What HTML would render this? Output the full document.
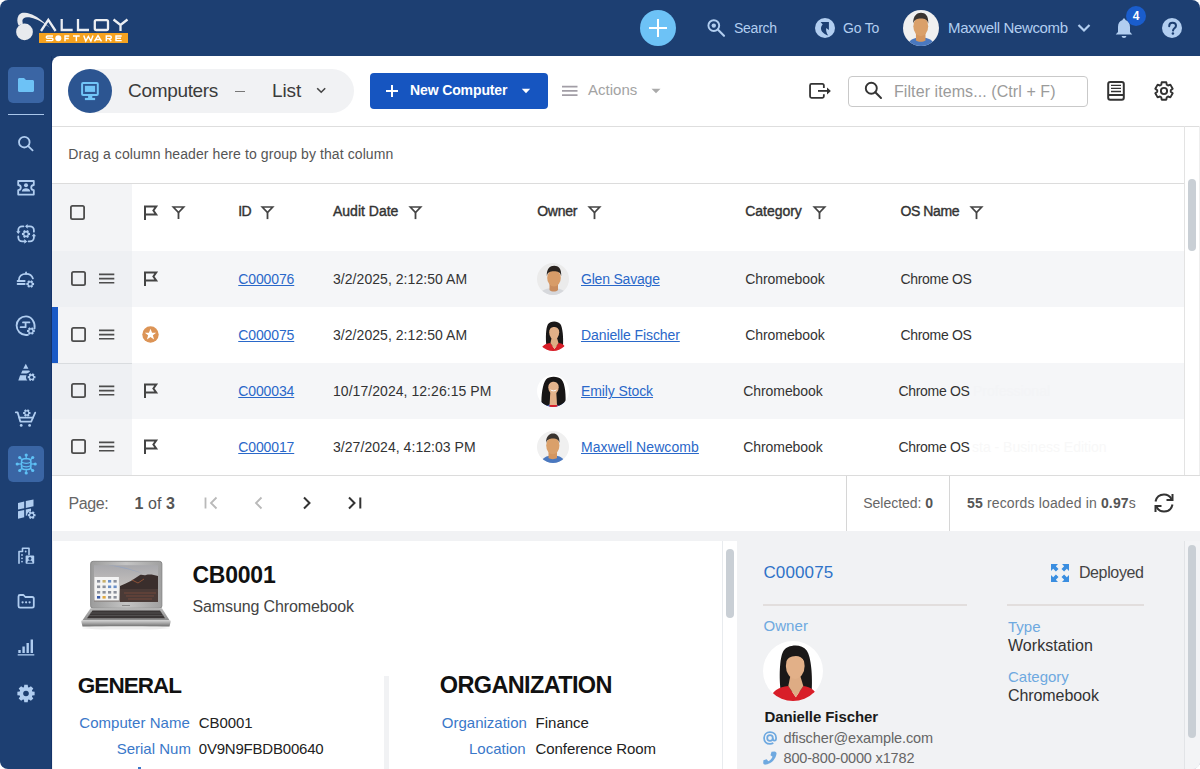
<!DOCTYPE html>
<html><head><meta charset="utf-8">
<style>
*{box-sizing:border-box;margin:0;padding:0}
html,body{width:1200px;height:769px;overflow:hidden;background:#fff;font-family:"Liberation Sans",sans-serif}
.app{position:absolute;left:0;top:0;width:1200px;height:769px;background:#1d3f72;border-radius:8px;overflow:hidden}
.a{position:absolute}
.t{position:absolute;line-height:1;white-space:nowrap}
svg{position:absolute;overflow:visible}
u{text-decoration:underline;text-underline-offset:1px}
</style></head><body>
<div class="app">
<svg style="left:0;top:0" width="140" height="56" viewBox="0 0 140 56">
  <circle cx="24.5" cy="31.9" r="8.4" fill="#e8eaee"/>
  <path d="M18.6 25.5 C17 22.5 16.8 18.5 18.5 15.5 C20 13 22.5 12.6 25 12.7 C31 13 38 17 44 22.5 L50 27.8 L43.5 23.3 C38 19.5 31.5 17 27 17.2 C24.5 17.3 22.6 18.5 22.4 20.5 C22.3 21.8 22.6 22.8 23 23.5 Z" fill="#e8eaee"/>
  <g fill="none" stroke="#eceef2" stroke-width="2.3" stroke-linejoin="miter">
    <path d="M41 31 L48.3 19.8 L55.6 31"/>
    <path d="M61.7 19 V30 H72.7"/>
    <path d="M78 19 V30 H89"/>
    <rect x="94.8" y="20.1" width="13.2" height="9.9" rx="1.5"/>
    <path d="M113.5 19.5 L120.5 25 L127.5 19.5 M120.5 25 V31"/>
  </g>
  <rect x="39" y="33" width="89" height="10" fill="#f5a21f"/>
  <g fill="none" stroke="#ffffff" stroke-width="1.45">
    <path d="M53 36 H47.5 C46.6 36 46.3 36.5 46.3 37.2 C46.3 37.9 46.6 38.3 47.5 38.3 H51.8 C52.7 38.3 53 38.8 53 39.5 C53 40.3 52.7 40.6 51.8 40.6 H46.1"/>
    <path d="M65 41.3 V36 H69.3 M65 38.5 H68.8"/>
    <path d="M73 36 H79.7 M76.35 36 V41.3"/>
    <path d="M83.7 35.5 L85.8 41 L88.35 36.5 L90.9 41 L93 35.5"/>
    <path d="M94.5 41.3 L98 35.7 L101.5 41.3 M95.8 39.5 H100.2"/>
    <path d="M106.3 41.3 V36 H110 C111 36 111.3 36.5 111.3 37.3 C111.3 38.1 111 38.6 110 38.6 H106.3 M109 38.6 L111.3 41.3"/>
    <path d="M121.7 36 H116 V40.6 H121.7 M116 38.3 H121"/>
  </g>
  <circle cx="58.3" cy="38.2" r="3" fill="#fff"/>
</svg>
<div class="a" style="left:640px;top:10px;width:36px;height:36px;background:#6dc2f6;border-radius:50%"></div>
<div class="a" style="left:649px;top:26.8px;width:18px;height:2.4px;background:#fff;"></div>
<div class="a" style="left:656.8px;top:19px;width:2.4px;height:18px;background:#fff;"></div>
<svg style="left:700px;top:14px" width="30" height="30" viewBox="0 0 30 30">
  <circle cx="13.8" cy="11.6" r="5.4" fill="none" stroke="#b2cef0" stroke-width="1.9"/>
  <circle cx="13.8" cy="11.6" r="2.2" fill="#b2cef0"/>
  <path d="M17.8 15.6 L24 21.8" stroke="#b2cef0" stroke-width="2.1" stroke-linecap="round"/>
</svg>
<div class="t" style="left:734px;top:21.45px;font-size:14px;color:#b2cef0;letter-spacing:-0.25px;">Search</div>
<svg style="left:815px;top:18px" width="20" height="20" viewBox="0 0 20 20">
  <circle cx="10" cy="10" r="10" fill="#b2cef0"/>
  <path d="M5.6 4 H13.9 V12 L11.2 10 C10.8 12.5 11.5 15 13.2 17.5 C9 16 6 13.5 6 10.5 C6 8.8 6.7 7.5 7.7 6.6 Z" fill="#1d3f72"/>
</svg>
<div class="t" style="left:843px;top:21.45px;font-size:14px;color:#b2cef0;letter-spacing:-0.2px;">Go To</div>
<svg style="left:903px;top:10px" width="36" height="36" viewBox="0 0 32 32">
  <defs><clipPath id="cav1"><circle cx="16" cy="16" r="16"/></clipPath></defs>
  <g clip-path="url(#cav1)">
    <rect width="32" height="32" fill="#f0f0f0"/>
    <path d="M4 32 C5 27 9 24.5 16 24.5 C23 24.5 27 27 28 32 Z" fill="#4a78bf"/>
    <path d="M11.5 19 H20 V27 C18 28.5 13.5 28.5 11.5 27 Z" fill="#d49660"/>
    <ellipse cx="15.8" cy="14.5" rx="6.6" ry="8.8" fill="#daa06a"/>
    <path d="M9 12 C9 5 12.5 2.5 16 2.5 C19.8 2.5 22.8 5 22.5 12 C21.5 8.5 19.5 7.5 16 7.5 C12.5 7.5 10 8.5 9 12 Z" fill="#3a3430"/>
  </g>
</svg>
<div class="t" style="left:948px;top:19.60px;font-size:15px;color:#b2cef0;letter-spacing:-0.36px;">Maxwell Newcomb</div>
<svg style="left:1076px;top:22px" width="16" height="12" viewBox="0 0 16 12">
  <path d="M2.5 3 L8 8.5 L13.5 3" fill="none" stroke="#b2cef0" stroke-width="2.2"/>
</svg>
<svg style="left:1112px;top:16px" width="24" height="24" viewBox="0 0 24 24">
  <path d="M12 2.5 C12.9 2.5 13.4 3.2 13.4 4 C16.5 4.8 18 7.5 18 11 V16 L20.3 18.5 H3.7 L6 16 V11 C6 7.5 7.5 4.8 10.6 4 C10.6 3.2 11.1 2.5 12 2.5 Z" fill="#b2cef0"/>
  <path d="M9.6 20 H14.4 C14.2 21.3 13.3 22 12 22 C10.7 22 9.8 21.3 9.6 20 Z" fill="#b2cef0"/>
</svg>
<div class="a" style="left:1126px;top:6px;width:20px;height:20px;background:#1a5dcc;border-radius:50%"></div>
<div class="t" style="left:1126px;top:9.5px;width:20px;text-align:center;font-size:12px;font-weight:bold;color:#fff">4</div>
<div class="a" style="left:1162px;top:17.8px;width:20px;height:20px;background:#b2cef0;border-radius:50%"></div>
<svg style="left:1161.5px;top:17.5px" width="21" height="21" viewBox="0 0 21 21">
  <path d="M7.2 8.2 C7.2 6 8.7 4.8 10.6 4.8 C12.6 4.8 14 6 14 7.8 C14 10.2 11.2 10.4 11 12.6" fill="none" stroke="#1d3f72" stroke-width="2" stroke-linecap="round"/>
  <circle cx="10.9" cy="15.6" r="1.25" fill="#1d3f72"/>
</svg>
<div class="a" style="left:51px;top:56px;width:1px;height:713px;background:#14336a;"></div>
<div class="a" style="left:8px;top:67px;width:36px;height:36px;background:#3a65a4;border-radius:5px"></div>
<svg style="left:17px;top:77px" width="18" height="16" viewBox="0 0 18 16">
  <path d="M1 2.5 C1 1.6 1.6 1 2.5 1 H7 L9 3 H15.5 C16.4 3 17 3.6 17 4.5 V13.5 C17 14.4 16.4 15 15.5 15 H2.5 C1.6 15 1 14.4 1 13.5 Z" fill="#6dc2f6"/>
</svg>
<div class="a" style="left:8px;top:114px;width:36px;height:1.2px;background:#a9c6ea;"></div>
<svg style="left:0;top:0" width="52" height="769" viewBox="0 0 52 769">
<g fill="none" stroke="#b0cdf0" stroke-width="1.8" stroke-linecap="round" stroke-linejoin="round">
<circle cx="24.3" cy="142.2" r="5.3"/><path d="M28.2 146.1 L32.6 150.3"/>
<path d="M18.2 181 H33.8 V185 A2.6 2.6 0 0 0 33.8 190.2 V194.6 H18.2 V190.2 A2.6 2.6 0 0 0 18.2 185 Z"/>
</g>
<circle cx="26" cy="185.3" r="2" fill="#b0cdf0"/><path d="M21.8 191.5 C22 189 23.8 188.3 26 188.3 C28.2 188.3 30 189 30.2 191.5 Z" fill="#b0cdf0"/>
<g fill="none" stroke="#b0cdf0" stroke-width="1.8" stroke-linecap="round" stroke-linejoin="round">
<path d="M18.3 232 V230 C18.3 228 20 226.3 22 226.3 H23.5"/>
<path d="M27 226.3 H30 C32.2 226.3 33.9 228 33.9 230.2 V231.7"/>
<path d="M33.9 236 V237.6 C33.9 239.8 32.2 241.4 30 241.4 H28.6"/>
<path d="M18.3 236.5 V237.6 C18.3 239.8 20 241.4 22.2 241.4 H24.5"/>
</g>
<path d="M16.2 231.2 H20.4 L18.3 234 Z M27.6 223.9 V228.7 L25 226.3 Z M31.7 236.2 H36.1 L33.9 233.4 Z M24.3 239 L27.2 241.4 L24.3 243.8 Z" fill="#b0cdf0"/>
<path d="M28.76 232.77 L30.06 232.91 L30.06 235.09 L28.76 235.23 L28.45 235.78 L28.97 236.97 L27.09 238.06 L26.32 237.01 L25.68 237.01 L24.91 238.06 L23.03 236.97 L23.55 235.78 L23.24 235.23 L21.94 235.09 L21.94 232.91 L23.24 232.77 L23.55 232.22 L23.03 231.03 L24.91 229.94 L25.68 230.99 L26.32 230.99 L27.09 229.94 L28.97 231.03 L28.45 232.22 Z" fill="#b0cdf0"/><circle cx="26" cy="234" r="1.6" fill="#1d3f72"/>
<g fill="none" stroke="#b0cdf0" stroke-width="1.8" stroke-linecap="round" stroke-linejoin="round">
<path d="M18.8 280.4 C18.8 276 22 273.8 26.1 273.8 C29.5 273.8 32 275.5 32.9 278.4"/><path d="M26.1 272.3 V273.8"/><path d="M17.6 281 H24.7 M17.6 284 H24.7"/>
</g>
<path d="M32.83 282.83 L34.06 282.96 L34.06 285.04 L32.83 285.17 L32.53 285.69 L33.03 286.83 L31.24 287.86 L30.50 286.86 L29.90 286.86 L29.16 287.86 L27.37 286.83 L27.87 285.69 L27.57 285.17 L26.34 285.04 L26.34 282.96 L27.57 282.83 L27.87 282.31 L27.37 281.17 L29.16 280.14 L29.90 281.14 L30.50 281.14 L31.24 280.14 L33.03 281.17 L32.53 282.31 Z" fill="#b0cdf0"/><circle cx="30.2" cy="284" r="1.5" fill="#1d3f72"/>
<g fill="none" stroke="#b0cdf0" stroke-width="1.8" stroke-linecap="round" stroke-linejoin="round">
<path d="M34.6 328.5 C35.3 322 31.5 316.3 26 316.3 C20.8 316.3 16.6 320.4 16.6 325.6 C16.6 330.8 20.8 335 26 335 C26.8 335 27.4 334.9 28 334.8"/>
<path d="M23 322.4 H29.4 M25.6 322.4 V327.2 M20.6 327.2 H25.6"/>
</g>
<path d="M33.53 329.83 L34.76 329.96 L34.76 332.04 L33.53 332.17 L33.23 332.69 L33.73 333.83 L31.94 334.86 L31.20 333.86 L30.60 333.86 L29.86 334.86 L28.07 333.83 L28.57 332.69 L28.27 332.17 L27.04 332.04 L27.04 329.96 L28.27 329.83 L28.57 329.31 L28.07 328.17 L29.86 327.14 L30.60 328.14 L31.20 328.14 L31.94 327.14 L33.73 328.17 L33.23 329.31 Z" fill="#b0cdf0"/><circle cx="30.9" cy="331" r="1.5" fill="#1d3f72"/>
<path d="M25.8 363.8 L28.4 368.8 H23.2 Z M22.4 370.6 H29.3 L30.7 373.4 H21 Z M20.1 375.2 H31.6 L33 378 V380.4 H18.3 Z" fill="#b0cdf0"/>
<circle cx="31.6" cy="377.2" r="5.6" fill="#1d3f72"/>
<path d="M34.23 376.03 L35.46 376.16 L35.46 378.24 L34.23 378.37 L33.93 378.89 L34.43 380.03 L32.64 381.06 L31.90 380.06 L31.30 380.06 L30.56 381.06 L28.77 380.03 L29.27 378.89 L28.97 378.37 L27.74 378.24 L27.74 376.16 L28.97 376.03 L29.27 375.51 L28.77 374.37 L30.56 373.34 L31.30 374.34 L31.90 374.34 L32.64 373.34 L34.43 374.37 L33.93 375.51 Z" fill="#b0cdf0"/><circle cx="31.6" cy="377.2" r="1.5" fill="#1d3f72"/>
<g fill="none" stroke="#b0cdf0" stroke-width="1.8" stroke-linecap="round" stroke-linejoin="round">
<path d="M15.8 412.3 H17.6 L20.3 421.6 H31.2 L35.2 412.6"/><path d="M19.3 417.6 H33"/>
</g>
<circle cx="21.2" cy="425.4" r="1.4" fill="#b0cdf0"/><circle cx="29.6" cy="425.4" r="1.4" fill="#b0cdf0"/>
<path d="M29.30 411.89 L30.47 412.02 L30.47 413.98 L29.30 414.11 L29.01 414.61 L29.49 415.69 L27.78 416.67 L27.09 415.72 L26.51 415.72 L25.82 416.67 L24.11 415.69 L24.59 414.61 L24.30 414.11 L23.13 413.98 L23.13 412.02 L24.30 411.89 L24.59 411.39 L24.11 410.31 L25.82 409.33 L26.51 410.28 L27.09 410.28 L27.78 409.33 L29.49 410.31 L29.01 411.39 Z" fill="#b0cdf0"/><circle cx="26.8" cy="413" r="1.4" fill="#1d3f72"/>
<path d="M18 503 L24.2 501.5 V508.3 L18 509.5 Z M25.8 501.1 L33.5 499.4 V506.3 L25.8 507.9 Z M18 511.2 L24.2 510 V517.3 L18 518.8 Z M25.8 509.6 L31 508.6 V511 C28.5 511.5 27 513.5 27 515.5 L25.8 515.8 Z" fill="#b0cdf0"/>
<path d="M34.33 514.03 L35.56 514.16 L35.56 516.24 L34.33 516.37 L34.03 516.89 L34.53 518.03 L32.74 519.06 L32.00 518.06 L31.40 518.06 L30.66 519.06 L28.87 518.03 L29.37 516.89 L29.07 516.37 L27.84 516.24 L27.84 514.16 L29.07 514.03 L29.37 513.51 L28.87 512.37 L30.66 511.34 L31.40 512.34 L32.00 512.34 L32.74 511.34 L34.53 512.37 L34.03 513.51 Z" fill="#b0cdf0"/><circle cx="31.7" cy="515.2" r="1.4" fill="#1d3f72"/>
<g fill="none" stroke="#b0cdf0" stroke-width="1.6" stroke-linecap="round" stroke-linejoin="round">
<path d="M19 563.2 V551.5 H22.5 V548.3 H29 V554.5"/>
</g>
<circle cx="22" cy="555" r="0.9" fill="#b0cdf0"/><circle cx="22" cy="558.3" r="0.9" fill="#b0cdf0"/><circle cx="22" cy="561.6" r="0.9" fill="#b0cdf0"/><circle cx="25.7" cy="551.5" r="0.9" fill="#b0cdf0"/>
<rect x="25.6" y="555.6" width="8.6" height="8.2" rx="0.8" fill="#b0cdf0"/><circle cx="29.9" cy="558.4" r="1.5" fill="#1d3f72"/><path d="M27.3 562.7 C27.5 561 28.5 560.4 29.9 560.4 C31.3 560.4 32.3 561 32.5 562.7 Z" fill="#1d3f72"/>
<g fill="none" stroke="#b0cdf0" stroke-width="1.8" stroke-linecap="round" stroke-linejoin="round">
<path d="M18.5 596.5 C18.5 595.5 19 595 20 595 H23.5 L25.3 597 H32.2 C33.2 597 33.8 597.6 33.8 598.6 V606 C33.8 607 33.2 607.6 32.2 607.6 H20 C19 607.6 18.5 607 18.5 606 Z"/>
</g>
<circle cx="22.6" cy="602.3" r="1.1" fill="#b0cdf0"/><circle cx="26.1" cy="602.3" r="1.1" fill="#b0cdf0"/><circle cx="29.6" cy="602.3" r="1.1" fill="#b0cdf0"/>
<rect x="18.3" y="650" width="2.4" height="3" fill="#b0cdf0"/><rect x="22.4" y="646.5" width="2.4" height="6.5" fill="#b0cdf0"/><rect x="26.5" y="643" width="2.4" height="10" fill="#b0cdf0"/><rect x="30.6" y="639.5" width="2.4" height="13.5" fill="#b0cdf0"/><rect x="17.7" y="654.2" width="16.6" height="1.3" fill="#b0cdf0"/>
<path d="M32.28 691.46 L34.63 691.78 L34.63 695.22 L32.28 695.54 L31.88 696.50 L33.32 698.39 L30.89 700.82 L29.00 699.38 L28.04 699.78 L27.72 702.13 L24.28 702.13 L23.96 699.78 L23.00 699.38 L21.11 700.82 L18.68 698.39 L20.12 696.50 L19.72 695.54 L17.37 695.22 L17.37 691.78 L19.72 691.46 L20.12 690.50 L18.68 688.61 L21.11 686.18 L23.00 687.62 L23.96 687.22 L24.28 684.87 L27.72 684.87 L28.04 687.22 L29.00 687.62 L30.89 686.18 L33.32 688.61 L31.88 690.50 Z" fill="#b0cdf0"/><circle cx="26" cy="693.5" r="2.8" fill="#1d3f72"/>
</svg>
<div class="a" style="left:8px;top:446px;width:36px;height:36px;border-radius:5px;background:#3a65a4"></div>
<svg style="left:0;top:0" width="52" height="769" viewBox="0 0 52 769"><g stroke="#5ec0f5" stroke-width="1.3">
<line x1="26.2" y1="464" x2="35.20" y2="464.00"/>
<line x1="26.2" y1="464" x2="32.71" y2="470.51"/>
<line x1="26.2" y1="464" x2="26.20" y2="473.00"/>
<line x1="26.2" y1="464" x2="19.69" y2="470.51"/>
<line x1="26.2" y1="464" x2="17.20" y2="464.00"/>
<line x1="26.2" y1="464" x2="19.69" y2="457.49"/>
<line x1="26.2" y1="464" x2="26.20" y2="455.00"/>
<line x1="26.2" y1="464" x2="32.71" y2="457.49"/>
</g>
<circle cx="35.20" cy="464.00" r="1.6" fill="#5ec0f5"/>
<circle cx="32.71" cy="470.51" r="1.6" fill="#5ec0f5"/>
<circle cx="26.20" cy="473.00" r="1.6" fill="#5ec0f5"/>
<circle cx="19.69" cy="470.51" r="1.6" fill="#5ec0f5"/>
<circle cx="17.20" cy="464.00" r="1.6" fill="#5ec0f5"/>
<circle cx="19.69" cy="457.49" r="1.6" fill="#5ec0f5"/>
<circle cx="26.20" cy="455.00" r="1.6" fill="#5ec0f5"/>
<circle cx="32.71" cy="457.49" r="1.6" fill="#5ec0f5"/>
<rect x="21.5" y="458.8" width="9.4" height="10.6" rx="3" fill="#3a65a4" stroke="#5ec0f5" stroke-width="1.5"/>
<path d="M22 462.3 C24 463.6 28.5 463.6 30.5 462.3 M22 465.8 C24 467.1 28.5 467.1 30.5 465.8" fill="none" stroke="#5ec0f5" stroke-width="1.3"/>
</svg>
<div class="a" style="left:52px;top:56px;width:1148px;height:713px;background:#fff;border-top-left-radius:8px"></div>
<div class="a" style="left:68px;top:69px;width:286px;height:44px;background:#f1f2f4;border-radius:22px"></div>
<div class="a" style="left:68px;top:68.5px;width:44px;height:44px;background:#2c5591;border-radius:50%"></div>
<svg style="left:80px;top:81px" width="20" height="20" viewBox="0 0 20 20">
  <rect x="2.1" y="1.9" width="15.7" height="12" rx="1" fill="none" stroke="#72c6f8" stroke-width="2"/>
  <rect x="4.9" y="4.8" width="10.2" height="6.1" fill="#72c6f8"/>
  <rect x="8.1" y="14.5" width="4.2" height="3" fill="#72c6f8"/>
  <rect x="4.9" y="16.9" width="10.2" height="2.2" fill="#72c6f8"/>
</svg>
<div class="t" style="left:128px;top:81.22px;font-size:19px;color:#3b3b3b;letter-spacing:-0.32px;">Computers</div>
<div class="a" style="left:235.2px;top:90.6px;width:10px;height:1.5px;background:#777;"></div>
<div class="t" style="left:271.9px;top:81.22px;font-size:19px;color:#3b3b3b;letter-spacing:-0.07px;">List</div>
<svg style="left:314px;top:84px" width="14" height="12" viewBox="0 0 14 12">
  <path d="M3.2 4.2 L7.2 8.2 L11.2 4.2" fill="none" stroke="#444" stroke-width="1.6"/>
</svg>
<div class="a" style="left:52px;top:126px;width:1148px;height:1px;background:#dedede;"></div>
<div class="a" style="left:370px;top:73px;width:178px;height:36px;background:#1655c0;border-radius:4px"></div>
<div class="a" style="left:386px;top:89.8px;width:12px;height:2px;background:#fff;"></div>
<div class="a" style="left:391px;top:84.8px;width:2px;height:12px;background:#fff;"></div>
<div class="t" style="left:410px;top:83.35px;font-size:14px;color:#fff;font-weight:bold;letter-spacing:-0.12px;">New Computer</div>
<svg style="left:520px;top:87px" width="12" height="8" viewBox="0 0 12 8">
  <path d="M1.8 1.8 H10.2 L6 6.2 Z" fill="#fff"/>
</svg>
<svg style="left:562px;top:80px" width="16" height="20" viewBox="0 0 16 20"><path d="M0 6.7 H15.5 M0 10.9 H15.5 M0 15.1 H15.5" stroke="#a29ea6" stroke-width="1.7"/></svg>
<div class="t" style="left:588px;top:81.70px;font-size:15px;color:#a3a3a3;letter-spacing:0.02px;">Actions</div>
<svg style="left:650px;top:87px" width="12" height="8" viewBox="0 0 12 8">
  <path d="M1.5 1.8 H10.5 L6 6.2 Z" fill="#aaa"/>
</svg>
<svg style="left:806px;top:80px" width="28" height="22" viewBox="0 0 28 22">
  <path d="M17.85 7.9 V5.4 C17.85 4.5 17.3 3.9 16.4 3.9 H5.5 C4.6 3.9 4.05 4.5 4.05 5.4 V16.35 C4.05 17.25 4.6 17.85 5.5 17.85 H16.4 C17.3 17.85 17.85 17.25 17.85 16.35 V14.25" fill="none" stroke="#333" stroke-width="1.8"/>
  <path d="M12 10.9 H22" stroke="#333" stroke-width="1.8"/>
  <path d="M21 7.4 L24.9 10.9 L21 14.4 Z" fill="#333"/>
</svg>
<div class="a" style="left:848px;top:76px;width:240px;height:31px;background:#fff;border:1px solid #c9c9c9;border-radius:4px"></div>
<svg style="left:862px;top:80px" width="22" height="20" viewBox="0 0 22 20">
  <circle cx="9.3" cy="8.3" r="5.5" fill="none" stroke="#333" stroke-width="1.9"/>
  <path d="M13.3 12.3 L19 18" stroke="#333" stroke-width="2" stroke-linecap="round"/>
</svg>
<div class="t" style="left:894px;top:83.66px;font-size:16px;color:#9b9b9b;letter-spacing:0.08px;">Filter items... (Ctrl + F)</div>
<svg style="left:1104px;top:80px" width="24" height="22" viewBox="0 0 24 22">
  <rect x="4.2" y="2" width="15.6" height="17.7" rx="2" fill="none" stroke="#333" stroke-width="2"/>
  <path d="M7 5.3 H17 M7 8.4 H17 M7 11.5 H17" stroke="#333" stroke-width="1.3"/>
  <path d="M4.2 15 H19.8" stroke="#333" stroke-width="2"/>
</svg>
<svg style="left:1150px;top:77px" width="28" height="28" viewBox="0 0 28 28">
  <path d="M20.21 11.23 L22.69 11.67 L22.69 16.33 L20.21 16.77 L19.50 18.00 L20.36 20.36 L16.33 22.69 L14.71 20.76 L13.29 20.76 L11.67 22.69 L7.64 20.36 L8.50 18.00 L7.79 16.77 L5.31 16.33 L5.31 11.67 L7.79 11.23 L8.50 10.00 L7.64 7.64 L11.67 5.31 L13.29 7.24 L14.71 7.24 L16.33 5.31 L20.36 7.64 L19.50 10.00 Z" fill="none" stroke="#333" stroke-width="1.9" stroke-linejoin="round" transform="rotate(30 14 14)"/>
  <circle cx="14" cy="14" r="3.1" fill="none" stroke="#333" stroke-width="1.9"/>
</svg>
<div class="t" style="left:68.3px;top:147.35px;font-size:14px;color:#555;letter-spacing:0.09px;">Drag a column header here to group by that column</div>
<div class="a" style="left:52px;top:183px;width:1132px;height:1px;background:#dcdcdc;"></div>
<div class="a" style="left:52px;top:184px;width:80px;height:67px;background:#f3f4f6;"></div>
<svg style="left:70.4px;top:204.5px" width="15" height="15" viewBox="0 0 15 15"><rect x="0.9" y="0.9" width="13.2" height="13.2" rx="1.6" fill="none" stroke="#4d4d4d" stroke-width="1.8"/></svg>
<svg style="left:142.5px;top:205px" width="16" height="16" viewBox="0 0 16 16">
  <path d="M2 15 V1.5 H13.2 L10.4 5.5 L13.2 9.5 H2" fill="none" stroke="#444" stroke-width="2" stroke-linejoin="miter"/>
</svg>
<svg style="left:171.5px;top:205.5px" width="13" height="14" viewBox="0 0 13 14">
  <path d="M1.3 1 H11.7 L6.5 6.6 Z" fill="none" stroke="#444" stroke-width="1.7" stroke-linejoin="miter"/>
  <path d="M6.5 6.5 V13.1" stroke="#444" stroke-width="1.8"/>
</svg>
<div class="t" style="left:238.25px;top:204.40px;font-size:14px;color:#333;letter-spacing:-0.7px;-webkit-text-stroke:0.4px #333;">ID</div>
<svg style="left:260.5px;top:205.5px" width="13" height="14" viewBox="0 0 13 14">
  <path d="M1.3 1 H11.7 L6.5 6.6 Z" fill="none" stroke="#444" stroke-width="1.7" stroke-linejoin="miter"/>
  <path d="M6.5 6.5 V13.1" stroke="#444" stroke-width="1.8"/>
</svg>
<div class="t" style="left:333px;top:204.40px;font-size:14px;color:#333;-webkit-text-stroke:0.4px #333;">Audit Date</div>
<svg style="left:408.5px;top:205.5px" width="13" height="14" viewBox="0 0 13 14">
  <path d="M1.3 1 H11.7 L6.5 6.6 Z" fill="none" stroke="#444" stroke-width="1.7" stroke-linejoin="miter"/>
  <path d="M6.5 6.5 V13.1" stroke="#444" stroke-width="1.8"/>
</svg>
<div class="t" style="left:537.2px;top:204.40px;font-size:14px;color:#333;letter-spacing:-0.25px;-webkit-text-stroke:0.4px #333;">Owner</div>
<svg style="left:588px;top:205.5px" width="13" height="14" viewBox="0 0 13 14">
  <path d="M1.3 1 H11.7 L6.5 6.6 Z" fill="none" stroke="#444" stroke-width="1.7" stroke-linejoin="miter"/>
  <path d="M6.5 6.5 V13.1" stroke="#444" stroke-width="1.8"/>
</svg>
<div class="t" style="left:745.2px;top:204.40px;font-size:14px;color:#333;letter-spacing:-0.02px;-webkit-text-stroke:0.4px #333;">Category</div>
<svg style="left:812.5px;top:205.5px" width="13" height="14" viewBox="0 0 13 14">
  <path d="M1.3 1 H11.7 L6.5 6.6 Z" fill="none" stroke="#444" stroke-width="1.7" stroke-linejoin="miter"/>
  <path d="M6.5 6.5 V13.1" stroke="#444" stroke-width="1.8"/>
</svg>
<div class="t" style="left:900.4px;top:204.40px;font-size:14px;color:#333;letter-spacing:-0.38px;-webkit-text-stroke:0.4px #333;">OS Name</div>
<svg style="left:969.5px;top:205.5px" width="13" height="14" viewBox="0 0 13 14">
  <path d="M1.3 1 H11.7 L6.5 6.6 Z" fill="none" stroke="#444" stroke-width="1.7" stroke-linejoin="miter"/>
  <path d="M6.5 6.5 V13.1" stroke="#444" stroke-width="1.8"/>
</svg>
<div class="a" style="left:132px;top:251px;width:1052px;height:56px;background:#f5f6f8;"></div>
<div class="a" style="left:52px;top:251px;width:80px;height:56px;background:#eef0f3;"></div>
<svg style="left:70.6px;top:270.8px" width="15" height="15" viewBox="0 0 15 15"><rect x="0.9" y="0.9" width="13.2" height="13.2" rx="1.6" fill="none" stroke="#4d4d4d" stroke-width="1.8"/></svg>
<svg style="left:98.5px;top:271px" width="16" height="16" viewBox="0 0 16 16"><path d="M0 3.4 H15.3 M0 7.6 H15.3 M0 11.8 H15.3" stroke="#4d4d4d" stroke-width="1.6"/></svg>
<svg style="left:142.5px;top:271px" width="16" height="16" viewBox="0 0 16 16">
  <path d="M2 15 V1.5 H13.2 L10.4 5.5 L13.2 9.5 H2" fill="none" stroke="#444" stroke-width="2" stroke-linejoin="miter"/>
</svg>
<div class="t" style="left:238.25px;top:272.40px;font-size:14px;color:#2a68c9;letter-spacing:-0.12px;"><u>C000076</u></div>
<div class="t" style="left:333px;top:272.40px;font-size:14px;color:#333;letter-spacing:0.05px;">3/2/2025, 2:12:50 AM</div>
<svg style="left:537px;top:263px" width="32" height="32" viewBox="0 0 32 32">
  <defs><clipPath id="av0"><circle cx="16" cy="16" r="16"/></clipPath></defs>
  <g clip-path="url(#av0)">
    <rect width="32" height="32" fill="#ebebeb"/>
    <path d="M3 32 C4 27 9 25 16 25 C23 25 28 27 29 32 Z" fill="#d6d8dc"/>
    <path d="M12.5 19 H21 V27 C19 29 14.5 29 12.5 27 Z" fill="#c98c5e"/>
    <ellipse cx="17" cy="15" rx="6.8" ry="8.6" fill="#d89c68"/>
    <path d="M9.8 13 C9.6 5.5 13 2.8 17.2 2.8 C21.5 2.8 24.6 5.5 24.2 13 C23.2 9 21 8.2 17 8.2 C13 8.2 10.8 9 9.8 13 Z" fill="#2a2420"/>
  </g>
</svg>
<div class="t" style="left:581px;top:272.40px;font-size:14px;color:#2a68c9;letter-spacing:-0.2px;"><u>Glen Savage</u></div>
<div class="t" style="left:745.2px;top:272.40px;font-size:14px;color:#333;letter-spacing:-0.06px;">Chromebook</div>
<div class="t" style="left:900.4px;top:272.40px;font-size:14px;color:#333;letter-spacing:-0.3px;">Chrome OS</div>
<div class="a" style="left:132px;top:307px;width:1052px;height:56px;background:#ffffff;"></div>
<div class="a" style="left:52px;top:307px;width:80px;height:56px;background:#f3f4f6;"></div>
<div class="a" style="left:52px;top:307px;width:6px;height:56px;background:#1a5ac6;"></div>
<svg style="left:70.6px;top:326.8px" width="15" height="15" viewBox="0 0 15 15"><rect x="0.9" y="0.9" width="13.2" height="13.2" rx="1.6" fill="none" stroke="#4d4d4d" stroke-width="1.8"/></svg>
<svg style="left:98.5px;top:327px" width="16" height="16" viewBox="0 0 16 16"><path d="M0 3.4 H15.3 M0 7.6 H15.3 M0 11.8 H15.3" stroke="#4d4d4d" stroke-width="1.6"/></svg>
<svg style="left:141.5px;top:325.9px" width="17" height="17" viewBox="0 0 17 17">
  <circle cx="8.5" cy="8.5" r="8.2" fill="#dc9456"/>
  <path d="M8.5 3.3 L9.9 6.9 L13.6 6.9 L10.6 9.2 L11.7 12.9 L8.5 10.7 L5.3 12.9 L6.4 9.2 L3.4 6.9 L7.1 6.9 Z" fill="#fff" transform="translate(8.5 8.3) scale(1.12) translate(-8.5 -8.3)"/>
</svg>
<div class="t" style="left:238.25px;top:328.40px;font-size:14px;color:#2a68c9;letter-spacing:-0.12px;"><u>C000075</u></div>
<div class="t" style="left:333px;top:328.40px;font-size:14px;color:#333;letter-spacing:0.05px;">3/2/2025, 2:12:50 AM</div>
<svg style="left:537px;top:319px" width="32" height="32" viewBox="0 0 32 32">
  <defs><clipPath id="av1"><circle cx="16" cy="16" r="16"/></clipPath></defs>
  <g clip-path="url(#av1)">
    <rect width="32" height="32" fill="#ffffff"/>
    <path d="M9.5 27 C8.5 20 8.8 9 10.8 5.5 C12.8 1.8 20.5 1.2 23.3 5 C25.8 8.5 26.5 19 26 27 Z" fill="#1a1818"/>
    <path d="M3.5 32 C4.5 26.5 8.5 24.5 13.5 24 L17.5 30 L21.5 24 C25.5 24.5 28.5 26 29.5 32 Z" fill="#d81e28"/>
    <path d="M14.5 19 H20 L21.5 24 L17.5 30 L13.5 24 Z" fill="#deac84"/>
    <ellipse cx="17.2" cy="13.3" rx="5" ry="6.9" fill="#e2b088"/>
    <path d="M11.8 11.5 C12 6.5 14 4.5 17 4.5 C20.5 4.5 22.5 7 22.3 11 C20.5 8 18 7.5 15.5 8.3 C13.5 9 12.5 10 11.8 11.5 Z" fill="#1a1818"/>
  </g>
</svg>
<div class="t" style="left:581px;top:328.40px;font-size:14px;color:#2a68c9;letter-spacing:-0.1px;"><u>Danielle Fischer</u></div>
<div class="t" style="left:745.2px;top:328.40px;font-size:14px;color:#333;letter-spacing:-0.06px;">Chromebook</div>
<div class="t" style="left:900.4px;top:328.40px;font-size:14px;color:#333;letter-spacing:-0.3px;">Chrome OS</div>
<div class="a" style="left:132px;top:363px;width:1052px;height:56px;background:#f5f6f8;"></div>
<div class="a" style="left:52px;top:363px;width:80px;height:56px;background:#eef0f3;"></div>
<div class="a" style="left:52px;top:363px;width:80px;height:1px;background:#d9dcdf;"></div>
<svg style="left:70.6px;top:382.8px" width="15" height="15" viewBox="0 0 15 15"><rect x="0.9" y="0.9" width="13.2" height="13.2" rx="1.6" fill="none" stroke="#4d4d4d" stroke-width="1.8"/></svg>
<svg style="left:98.5px;top:383px" width="16" height="16" viewBox="0 0 16 16"><path d="M0 3.4 H15.3 M0 7.6 H15.3 M0 11.8 H15.3" stroke="#4d4d4d" stroke-width="1.6"/></svg>
<svg style="left:142.5px;top:383px" width="16" height="16" viewBox="0 0 16 16">
  <path d="M2 15 V1.5 H13.2 L10.4 5.5 L13.2 9.5 H2" fill="none" stroke="#444" stroke-width="2" stroke-linejoin="miter"/>
</svg>
<div class="t" style="left:238.25px;top:384.40px;font-size:14px;color:#2a68c9;letter-spacing:-0.12px;"><u>C000034</u></div>
<div class="t" style="left:333px;top:384.40px;font-size:14px;color:#333;letter-spacing:0.05px;">10/17/2024, 12:26:15 PM</div>
<svg style="left:537px;top:375px" width="32" height="32" viewBox="0 0 32 32">
  <defs><clipPath id="av2"><circle cx="16" cy="16" r="16"/></clipPath></defs>
  <g clip-path="url(#av2)">
    <rect width="32" height="32" fill="#ffffff"/>
    <path d="M3 32 L5 26 L27 26 L29 32 Z" fill="#3a66c0"/>
    <path d="M4.5 30 C4 21 5.5 9 9 4.5 C12 1 21 0.8 24.5 4.5 C28.5 9 29 21 28.5 30 C25 31.5 21 31 19.5 29 L13 29 C11 31 7.5 31.5 4.5 30 Z" fill="#181616"/>
    <path d="M13.3 17 H19.3 L20 30 H12.6 Z" fill="#e2b088"/>
    <rect x="12.5" y="30" width="8" height="2" fill="#d81e28"/>
    <ellipse cx="16.5" cy="12.2" rx="5.2" ry="6.8" fill="#e4b48c"/>
    <path d="M11 10.5 C11.3 5.5 13.5 3.8 16.5 3.8 C19.8 3.8 22 6 21.8 10 C20 7 17.5 6.3 15 7 C13 7.6 11.8 9 11 10.5 Z" fill="#181616"/>
    <path d="M13.6 14.8 C15 16.2 18 16.2 19.4 14.8" stroke="#fff" stroke-width="1" fill="none"/>
  </g>
</svg>
<div class="t" style="left:581px;top:384.40px;font-size:14px;color:#2a68c9;letter-spacing:-0.1px;"><u>Emily Stock</u></div>
<div class="t" style="left:743.2px;top:384.40px;font-size:14px;color:#333;letter-spacing:-0.06px;">Chromebook</div>
<div class="t" style="left:898.4px;top:384.40px;font-size:14px;color:#333;letter-spacing:-0.3px;">Chrome OS</div>
<div class="t" style="left:973px;top:384.40px;font-size:14px;color:#f3f4f6;">Professional</div>
<div class="a" style="left:132px;top:419px;width:1052px;height:56px;background:#ffffff;"></div>
<div class="a" style="left:52px;top:419px;width:80px;height:56px;background:#f3f4f6;"></div>
<svg style="left:70.6px;top:438.8px" width="15" height="15" viewBox="0 0 15 15"><rect x="0.9" y="0.9" width="13.2" height="13.2" rx="1.6" fill="none" stroke="#4d4d4d" stroke-width="1.8"/></svg>
<svg style="left:98.5px;top:439px" width="16" height="16" viewBox="0 0 16 16"><path d="M0 3.4 H15.3 M0 7.6 H15.3 M0 11.8 H15.3" stroke="#4d4d4d" stroke-width="1.6"/></svg>
<svg style="left:142.5px;top:439px" width="16" height="16" viewBox="0 0 16 16">
  <path d="M2 15 V1.5 H13.2 L10.4 5.5 L13.2 9.5 H2" fill="none" stroke="#444" stroke-width="2" stroke-linejoin="miter"/>
</svg>
<div class="t" style="left:238.25px;top:440.40px;font-size:14px;color:#2a68c9;letter-spacing:-0.12px;"><u>C000017</u></div>
<div class="t" style="left:333px;top:440.40px;font-size:14px;color:#333;letter-spacing:0.05px;">3/27/2024, 4:12:03 PM</div>
<svg style="left:537px;top:431px" width="32" height="32" viewBox="0 0 32 32">
  <defs><clipPath id="av3"><circle cx="16" cy="16" r="16"/></clipPath></defs>
  <g clip-path="url(#av3)">
    <rect width="32" height="32" fill="#f0f0f0"/>
    <path d="M4 32 C5 27 9 24.5 16 24.5 C23 24.5 27 27 28 32 Z" fill="#4a78bf"/>
    <path d="M11.5 19 H20 V27 C18 28.5 13.5 28.5 11.5 27 Z" fill="#d49660"/>
    <ellipse cx="15.8" cy="14.5" rx="6.6" ry="8.8" fill="#daa06a"/>
    <path d="M9 12 C9 5 12.5 2.5 16 2.5 C19.8 2.5 22.8 5 22.5 12 C21.5 8.5 19.5 7.5 16 7.5 C12.5 7.5 10 8.5 9 12 Z" fill="#3a3430"/>
  </g>
</svg>
<div class="t" style="left:581px;top:440.40px;font-size:14px;color:#2a68c9;letter-spacing:0.08px;"><u>Maxwell Newcomb</u></div>
<div class="t" style="left:743.2px;top:440.40px;font-size:14px;color:#333;letter-spacing:-0.06px;">Chromebook</div>
<div class="t" style="left:898.4px;top:440.40px;font-size:14px;color:#333;letter-spacing:-0.3px;">Chrome OS</div>
<div class="t" style="left:972px;top:440.40px;font-size:14px;color:#f8f8f8;">sta - Business Edition</div>
<div class="a" style="left:1184px;top:126px;width:1px;height:349px;background:#e3e3e3;"></div>
<div class="a" style="left:1188px;top:179px;width:8px;height:72px;background:#c9cfd5;border-radius:4px"></div>
<div class="a" style="left:1199px;top:126px;width:1px;height:349px;background:#eeeeee;"></div>
<div class="a" style="left:52px;top:475px;width:1148px;height:1px;background:#dcdcdc;"></div>
<div class="t" style="left:68.4px;top:495.76px;font-size:16px;color:#666;letter-spacing:-0.38px;">Page:</div>
<div class="t" style="left:134.6px;top:495.76px;font-size:16px;color:#555;letter-spacing:0.03px;"><b>1</b> of <b>3</b></div>
<svg style="left:200px;top:494px" width="170" height="18" viewBox="0 0 170 18">
  <path d="M5.5 3.5 V14.5" stroke="#b9b9b9" stroke-width="1.8"/>
  <path d="M16.5 3.5 L11 9 L16.5 14.5" fill="none" stroke="#b9b9b9" stroke-width="1.8"/>
  <path d="M61.5 3.5 L56 9 L61.5 14.5" fill="none" stroke="#b9b9b9" stroke-width="1.8"/>
  <path d="M104 3.5 L109.5 9 L104 14.5" fill="none" stroke="#333" stroke-width="2"/>
  <path d="M149 3.5 L154.5 9 L149 14.5" fill="none" stroke="#333" stroke-width="2"/>
  <path d="M160.3 3.5 V14.5" stroke="#333" stroke-width="2"/>
</svg>
<div class="a" style="left:846px;top:476px;width:1px;height:55px;background:#d6d6d6;"></div>
<div class="a" style="left:949px;top:476px;width:1px;height:55px;background:#d6d6d6;"></div>
<div class="t" style="left:863.3px;top:495.95px;font-size:14px;color:#666;letter-spacing:-0.03px;">Selected: <b style="color:#555">0</b></div>
<div class="t" style="left:967px;top:495.95px;font-size:14px;color:#666;letter-spacing:0.15px;"><b style="color:#555">55</b> records loaded in <b style="color:#555">0.97</b>s</div>
<svg style="left:1152px;top:491px" width="24" height="24" viewBox="0 0 24 24">
  <path d="M3.5 10.5 C4.5 6 8 3.5 12 3.5 C15.5 3.5 18 5.3 19.5 8" fill="none" stroke="#333" stroke-width="2"/>
  <path d="M20.5 3 V9 H14.5" fill="none" stroke="#333" stroke-width="2"/>
  <path d="M20.5 13.5 C19.5 18 16 20.5 12 20.5 C8.5 20.5 6 18.7 4.5 16" fill="none" stroke="#333" stroke-width="2"/>
  <path d="M3.5 21 V15 H9.5" fill="none" stroke="#333" stroke-width="2"/>
</svg>
<div class="a" style="left:52px;top:531px;width:1148px;height:238px;background:#f1f2f4;"></div>
<div class="a" style="left:53px;top:541px;width:669px;height:228px;background:#ffffff;"></div>
<div class="a" style="left:722px;top:541px;width:15px;height:228px;background:#ffffff;border-left:1px solid #e8ebee"></div>
<div class="a" style="left:726px;top:549px;width:8px;height:69px;background:#c9cfd5;border-radius:4px"></div>
<svg style="left:76px;top:555px" width="100" height="75" viewBox="0 0 100 75">
  <defs>
    <linearGradient id="lid" x1="0" y1="0" x2="1" y2="0">
      <stop offset="0" stop-color="#9c9c9c"/><stop offset="0.5" stop-color="#c4c4c4"/><stop offset="1" stop-color="#a0a0a0"/>
    </linearGradient>
    <linearGradient id="sky" x1="0" y1="0" x2="0" y2="1">
      <stop offset="0" stop-color="#a8a8ac"/><stop offset="0.6" stop-color="#c6c2bf"/><stop offset="1" stop-color="#8a8482"/>
    </linearGradient>
    <linearGradient id="deck" x1="0" y1="0" x2="0" y2="1">
      <stop offset="0" stop-color="#b8b8b8"/><stop offset="1" stop-color="#8c8c8c"/>
    </linearGradient>
    <linearGradient id="front" x1="0" y1="0" x2="0" y2="1">
      <stop offset="0" stop-color="#d4d4d4"/><stop offset="0.5" stop-color="#a4a4a4"/><stop offset="1" stop-color="#6e6e6e"/>
    </linearGradient>
  </defs>
  <rect x="14.6" y="6.3" width="71.3" height="47" rx="2.5" fill="url(#lid)" stroke="#7c7c7c" stroke-width="0.8"/>
  <rect x="18" y="10.2" width="64" height="36.6" fill="url(#sky)"/>
  <path d="M30 9.5 C45 11 55 14 66 18 C58 16 48 13 30 9.5 Z" fill="#8aa0c8" opacity="0.6"/>
  <path d="M44 31 C52 28 58 24 64 20 C66 19 68 21 70 20 C74 19 78 20 82 21 V46.8 H44 Z" fill="#3a2e2c"/>
  <path d="M44 34 H82 V46.8 H44 Z" fill="#4a3a36"/>
  <path d="M48 38 H80 M50 41 H78 M52 44 H76" stroke="#8a5040" stroke-width="0.8" opacity="0.8"/>
  <path d="M56 25 L62 28 L68 24" stroke="#a05a3a" stroke-width="1" fill="none" opacity="0.8"/>
  <rect x="18.5" y="22" width="24.4" height="23.4" fill="#f4f4f4"/>
  <g fill="#8a8f9a">
    <rect x="21" y="25" width="3.2" height="2.6"/><rect x="26.5" y="25" width="3.2" height="2.6" fill="#c9b06a"/><rect x="32" y="25" width="3.2" height="2.6" fill="#6a8fc8"/><rect x="37.5" y="25" width="3.2" height="2.6"/>
    <rect x="21" y="30.5" width="3.2" height="2.6"/><rect x="26.5" y="30.5" width="3.2" height="2.6"/><rect x="32" y="30.5" width="3.2" height="2.6" fill="#6a8fc8"/><rect x="37.5" y="30.5" width="3.2" height="2.6" fill="#6a8fc8"/>
    <rect x="21" y="36" width="3.2" height="2.6"/><rect x="26.5" y="36" width="3.2" height="2.6"/><rect x="32" y="36" width="3.2" height="2.6"/><rect x="37.5" y="36" width="3.2" height="2.6"/>
    <rect x="21" y="41" width="3.2" height="2.6" fill="#3a5aa8"/><rect x="26.5" y="41" width="3.2" height="2.6" fill="#e0a840"/><rect x="32" y="41" width="3.2" height="2.6"/><rect x="37.5" y="41" width="3.2" height="2.6"/>
  </g>
  <rect x="46" y="50" width="8" height="1" fill="#888"/>
  <path d="M14.6 53.2 H85.9 L93.7 65.4 H6.3 Z" fill="url(#deck)"/>
  <path d="M16.5 55.5 H84 L89 63.2 H11 Z" fill="#3a3636"/>
  <path d="M14 58 H86 M12.5 60.5 H87.5" stroke="#6a6a6a" stroke-width="0.5"/>
  <path d="M6 65.2 H94 C94.5 65.2 95 66 94.5 67.5 L93.5 71.5 H6.5 L5.5 67.5 C5 66 5.5 65.2 6 65.2 Z" fill="url(#front)"/>
  <ellipse cx="50" cy="73" rx="44" ry="1.6" fill="#ededed"/>
</svg>
<div class="t" style="left:192.5px;top:563.63px;font-size:23px;color:#111;font-weight:bold;letter-spacing:-0.24px;">CB0001</div>
<div class="t" style="left:192.5px;top:598.66px;font-size:16px;color:#444;letter-spacing:-0.12px;">Samsung Chromebook</div>
<div class="t" style="left:77.8px;top:674.95px;font-size:22.5px;color:#111;font-weight:bold;letter-spacing:-0.95px;">GENERAL</div>
<div class="t" style="left:79.3px;top:715.10px;font-size:15px;color:#3a78c9;letter-spacing:0.04px;">Computer Name</div>
<div class="t" style="left:198.8px;top:715.10px;font-size:15px;color:#222;letter-spacing:-0.1px;">CB0001</div>
<div class="t" style="left:116.7px;top:741.00px;font-size:15px;color:#3a78c9;">Serial Num</div>
<div class="t" style="left:198.8px;top:741.00px;font-size:15px;color:#222;letter-spacing:-0.21px;">0V9N9FBDB00640</div>
<div class="a" style="left:383.5px;top:676px;width:5px;height:93px;background:#f1f2f4;"></div>
<div class="t" style="left:439.8px;top:674.11px;font-size:23.5px;color:#111;font-weight:bold;letter-spacing:-0.64px;">ORGANIZATION</div>
<div class="t" style="left:441.8px;top:715.10px;font-size:15px;color:#3a78c9;">Organization</div>
<div class="t" style="left:535.6px;top:715.10px;font-size:15px;color:#222;">Finance</div>
<div class="t" style="left:469px;top:741.00px;font-size:15px;color:#3a78c9;">Location</div>
<div class="t" style="left:535.6px;top:741.00px;font-size:15px;color:#222;letter-spacing:-0.09px;">Conference Room</div>
<div class="a" style="left:138px;top:767px;width:3px;height:2px;background:#3a78c9;"></div>
<div class="t" style="left:763.4px;top:564.36px;font-size:17px;color:#2f72c8;letter-spacing:0.14px;">C000075</div>
<div class="a" style="left:763px;top:604px;width:204px;height:2px;background:#e2dedd;"></div>
<div class="a" style="left:1007px;top:604px;width:137px;height:2px;background:#e2dedd;"></div>
<div class="t" style="left:763.4px;top:618.20px;font-size:15px;color:#6ea9e0;letter-spacing:0.08px;">Owner</div>
<svg style="left:763px;top:641px" width="60" height="60" viewBox="0 0 32 32">
  <defs><clipPath id="avd"><circle cx="16" cy="16" r="16"/></clipPath></defs>
  <g clip-path="url(#avd)">
    <rect width="32" height="32" fill="#ffffff"/>
    <path d="M9.5 27 C8.5 20 8.8 9 10.8 5.5 C12.8 1.8 20.5 1.2 23.3 5 C25.8 8.5 26.5 19 26 27 Z" fill="#1a1818"/>
    <path d="M3.5 32 C4.5 26.5 8.5 24.5 13.5 24 L17.5 30 L21.5 24 C25.5 24.5 28.5 26 29.5 32 Z" fill="#d81e28"/>
    <path d="M14.5 19 H20 L21.5 24 L17.5 30 L13.5 24 Z" fill="#deac84"/>
    <ellipse cx="17.2" cy="13.3" rx="5" ry="6.9" fill="#e2b088"/>
    <path d="M11.8 11.5 C12 6.5 14 4.5 17 4.5 C20.5 4.5 22.5 7 22.3 11 C20.5 8 18 7.5 15.5 8.3 C13.5 9 12.5 10 11.8 11.5 Z" fill="#1a1818"/>
  </g>
</svg>
<div class="t" style="left:764.4px;top:708.90px;font-size:15px;color:#1a1a1a;font-weight:bold;letter-spacing:-0.09px;">Danielle Fischer</div>
<svg style="left:763px;top:731px" width="14" height="14" viewBox="0 0 16 16">
  <path d="M11.2 8.2 C11.2 10 12 11 13 11 C14.5 11 15 9.5 15 8 C15 4 12 1.2 8 1.2 C4 1.2 1.2 4.2 1.2 8 C1.2 12 4 14.8 8 14.8 C9.5 14.8 10.8 14.4 11.8 13.8" fill="none" stroke="#6ea9e0" stroke-width="2"/>
  <circle cx="8" cy="8" r="3.2" fill="none" stroke="#6ea9e0" stroke-width="2"/>
</svg>
<svg style="left:762px;top:750px" width="16" height="16" viewBox="0 0 16 16">
  <path d="M3.5 1.5 L6.5 1.8 L7.5 5.2 L5.5 6.8 C6.5 9 7.8 10.3 9.7 11.2 L11.3 9.3 L14.6 10.2 L14.8 13.3 C14.5 14.3 13.5 14.8 12.2 14.6 C6.5 13.5 2.6 9.6 1.5 4 C1.3 2.6 2 1.7 3.5 1.5 Z" fill="#6ea9e0" transform="translate(16,0) scale(-1,1)"/>
</svg>
<div class="t" style="left:783.5px;top:731.43px;font-size:14.5px;color:#666;letter-spacing:-0.11px;">dfischer@example.com</div>
<div class="t" style="left:783.5px;top:751.03px;font-size:14.5px;color:#666;letter-spacing:-0.17px;">800-800-0000 x1782</div>
<svg style="left:1050px;top:563px" width="20" height="20" viewBox="0 0 20 20">
  <g fill="#3a8ee0">
    <path d="M1 1 H8 L5.8 3.2 L8.5 5.9 L5.9 8.5 L3.2 5.8 L1 8 Z"/>
    <path d="M19 1 V8 L16.8 5.8 L14.1 8.5 L11.5 5.9 L14.2 3.2 L12 1 Z"/>
    <path d="M1 19 V12 L3.2 14.2 L5.9 11.5 L8.5 14.1 L5.8 16.8 L8 19 Z"/>
    <path d="M19 19 H12 L14.2 16.8 L11.5 14.1 L14.1 11.5 L16.8 14.2 L19 12 Z"/>
  </g>
</svg>
<div class="t" style="left:1078.9px;top:565.26px;font-size:16px;color:#444;letter-spacing:-0.36px;">Deployed</div>
<div class="t" style="left:1008px;top:618.80px;font-size:15px;color:#6ea9e0;">Type</div>
<div class="t" style="left:1008px;top:638.46px;font-size:16px;color:#333;letter-spacing:0.06px;">Workstation</div>
<div class="t" style="left:1008px;top:668.70px;font-size:15px;color:#6ea9e0;">Category</div>
<div class="t" style="left:1008px;top:687.96px;font-size:16px;color:#333;letter-spacing:-0.08px;">Chromebook</div>
<div class="a" style="left:1184px;top:541px;width:16px;height:228px;background:#f3f4f6;border-left:1px solid #e2e4e7"></div>
<div class="a" style="left:1188px;top:545px;width:8px;height:193px;background:#c9cfd5;border-radius:4px"></div>
</div></body></html>
